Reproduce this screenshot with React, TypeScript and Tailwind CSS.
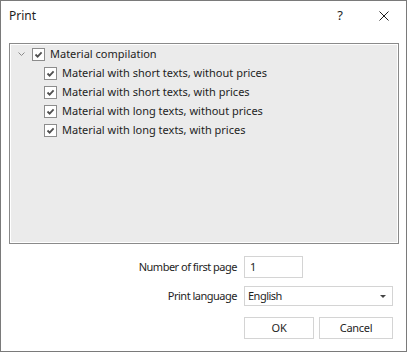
const FONT = { fontFamily: '"Noto Sans", "Open Sans", sans-serif' };

const CHILDREN = [
  "Material with short texts, without prices",
  "Material with short texts, with prices",
  "Material with long texts, without prices",
  "Material with long texts, with prices",
];

function CheckBox() {
  return (
    <span className="flex h-[13px] w-[13px] shrink-0 items-center justify-center border border-[#8c8c8c] bg-white">
      <svg width="9" height="9" viewBox="0 0 9 9">
        <path d="M1.5 4.5 L3.6 6.6 L7.6 2.4" fill="none" stroke="#505050" strokeWidth="1.8" />
      </svg>
    </span>
  );
}

function TreeRow({ label, indent }: { label: string; indent: boolean }) {
  return (
    <div className="flex h-[19px] items-center">
      {indent ? (
        <span className="w-[34px] shrink-0" />
      ) : (
        <span className="flex w-[22px] shrink-0 justify-end pr-[7px]">
          <svg width="7" height="5" viewBox="0 0 7 5">
            <path d="M0.5 0.5 L3.5 3.5 L6.5 0.5" fill="none" stroke="#8a8a8a" strokeWidth="1" />
          </svg>
        </span>
      )}
      <CheckBox />
      <span className="ml-[5px] whitespace-nowrap text-[11px] text-[#1e1e1e]">{label}</span>
    </div>
  );
}

export default function App() {
  return (
    <div
      className="flex h-[352px] w-[407px] flex-col border border-[#7a7a7a] bg-white text-[#1e1e1e]"
      style={FONT}
    >
      <div className="flex h-[30px] shrink-0 items-center pl-[8px]">
        <span className="text-[12px]">Print</span>
        <span className="ml-auto mr-[36px] text-[13px]">?</span>
        <svg className="mr-[17px]" width="10" height="10" viewBox="0 0 10 10">
          <path d="M0.5 0.5 L9.5 9.5 M9.5 0.5 L0.5 9.5" stroke="#1e1e1e" strokeWidth="1" />
        </svg>
      </div>

      <div className="ml-[8px] mr-[7px] mt-[12px] h-[201px] shrink-0 border border-[#8a8a8a] bg-[#ebebeb] pt-[1px] shadow-[inset_0_0_0_1px_#ffffff]">
        <TreeRow label="Material compilation" indent={false} />
        {CHILDREN.map((c) => (
          <TreeRow key={c} label={c} indent />
        ))}
      </div>

      <div className="mt-[12px] flex h-[22px] items-center text-[11px] tracking-[-0.5px]">
        <span className="w-[237px] pr-[1px] text-right">Number of first page</span>
        <div className="ml-[6px] flex h-[22px] w-[59px] items-center border border-[#d4d4d4] pl-[5px]">1</div>
      </div>

      <div className="mt-[8px] flex h-[20px] items-center text-[11px] tracking-[-0.5px]">
        <span className="w-[237px] pr-[1px] text-right">Print language</span>
        <div className="ml-[6px] flex h-[20px] w-[149px] items-center border border-[#d4d4d4] pl-[3px]">
          <span>English</span>
          <svg className="ml-auto mr-[6px]" width="6" height="3" viewBox="0 0 6 3">
            <path d="M0 0 H6 L3 3 Z" fill="#444444" />
          </svg>
        </div>
      </div>

      <div className="mt-[11px] flex pl-[243px] text-[11px] tracking-[-0.3px]">
        <button className="flex h-[22px] w-[70px] items-center justify-center border border-[#d4d4d4] bg-white">
          OK
        </button>
        <button className="ml-[5px] flex h-[22px] w-[74px] items-center justify-center border border-[#d4d4d4] bg-white">
          Cancel
        </button>
      </div>
    </div>
  );
}
